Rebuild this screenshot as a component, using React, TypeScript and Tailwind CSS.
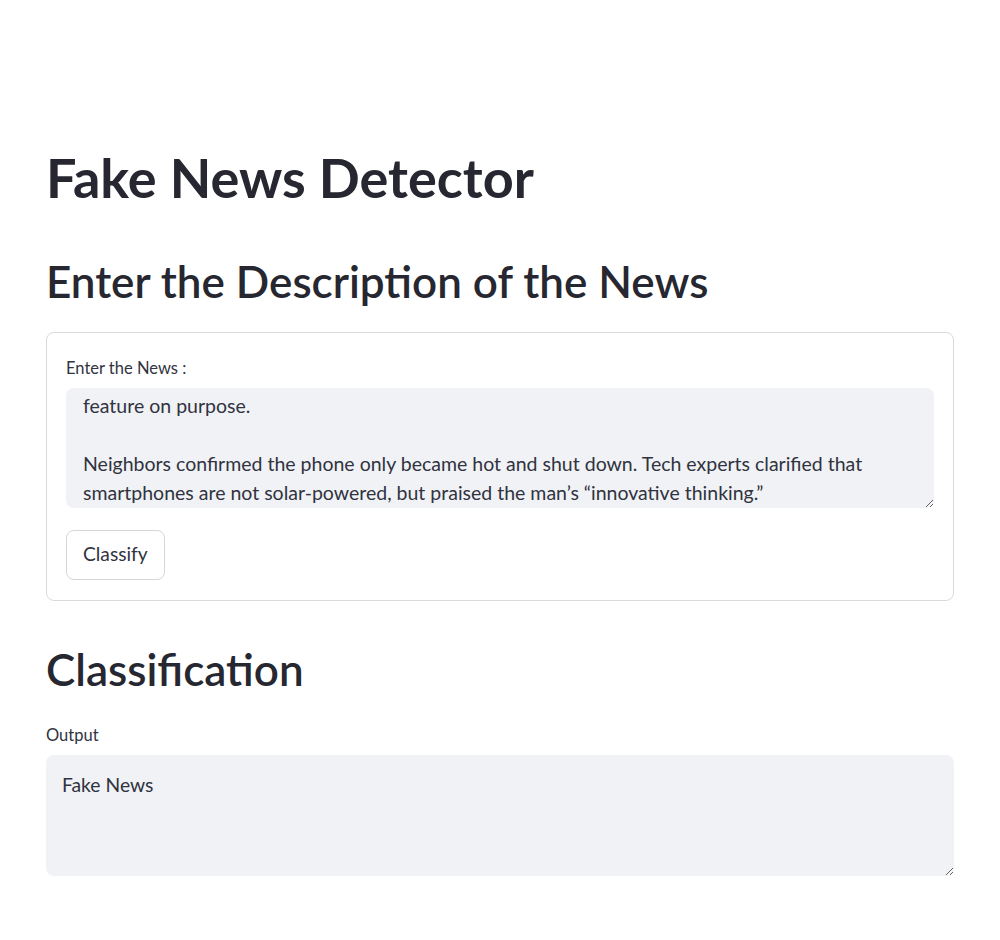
import React, { useEffect, useRef } from "react";

const newsText = [
  "A man in Ohio went viral after claiming he could charge his smartphone simply by leaving it",
  "under direct sunlight for three hours, insisting that the makers had hidden a solar charging",
  "feature on purpose.",
  "",
  "Neighbors confirmed the phone only became hot and shut down. Tech experts clarified that",
  "smartphones are not solar-powered, but praised the man\u2019s \u201cinnovative thinking.\u201d",
].join("\n");

const App: React.FC = () => {
  const newsRef = useRef<HTMLTextAreaElement>(null);

  useEffect(() => {
    if (newsRef.current) newsRef.current.scrollTop = 69;
  }, []);

  return (
    <div className="min-h-[940px] bg-white text-[#31333F] font-['Lato','Noto_Sans',sans-serif]">
      <div className="w-[908px] mx-auto pt-[148px] pb-16">
        <h1 className="text-[54px] leading-[59.4px] font-bold text-[#262730]">
          Fake News Detector
        </h1>

        <h2 className="mt-[50px] text-[44px] leading-[48.6px] font-semibold text-[#262730]">
          Enter the Description of the News
        </h2>

        <form
          className="mt-[26px] border border-[#dadadd] rounded-lg px-[19px] pt-[24px] pb-5"
          onSubmit={(e) => e.preventDefault()}
        >
          <label className="block text-[16.5px] leading-[23.6px]">
            Enter the News :
          </label>
          <textarea
            ref={newsRef}
            defaultValue={newsText}
            wrap="off"
            className="mt-[7px] block w-full h-[120px] bg-[#f0f2f6] rounded-lg px-[17px] py-4 text-[19.5px] leading-[28.8px] text-[#31333F] outline-none resize-y [scrollbar-width:none]"
          />
          <button
            type="submit"
            className="mt-[22px] h-[50px] px-4 bg-white border border-[#d6d6d9] rounded-lg text-[19.2px] text-[#31333F]"
          >
            Classify
          </button>
        </form>

        <h2 className="mt-[44px] text-[44px] leading-[48.6px] font-semibold text-[#262730]">
          Classification
        </h2>

        <label className="mt-[31px] block text-[16.5px] leading-[23.6px]">
          Output
        </label>
        <textarea
          readOnly
          defaultValue="Fake News"
          className="mt-[7px] block w-full h-[121px] bg-[#f0f2f6] rounded-lg px-4 py-4 text-[19.3px] leading-[28.8px] text-[#31333F] outline-none resize-y"
        />
      </div>
    </div>
  );
};

export default App;
